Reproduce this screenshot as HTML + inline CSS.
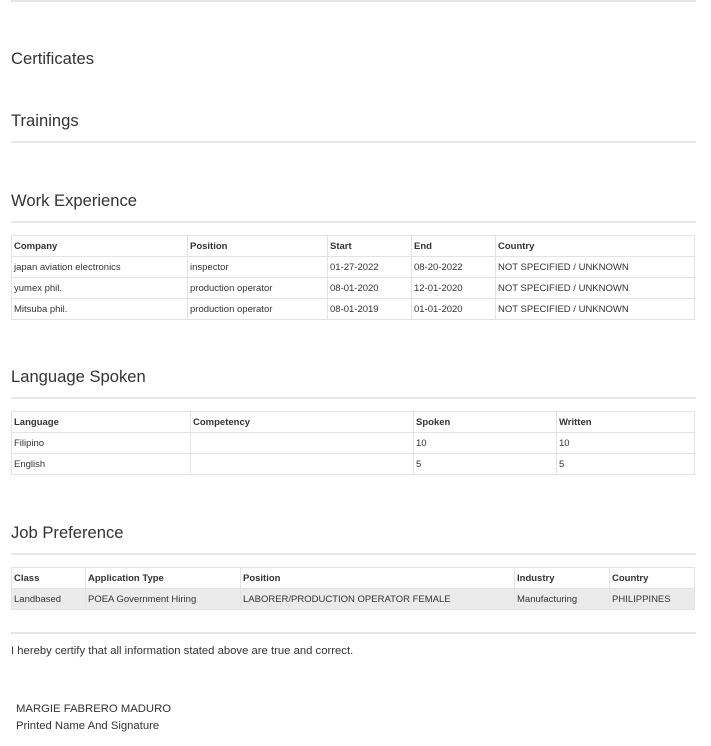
<!DOCTYPE html>
<html><head><style>
body{margin:0;width:711px;height:746px;background:#fff;font-family:"Liberation Sans",sans-serif;color:#333;position:relative;overflow:hidden}
.a{position:absolute}
h2{position:absolute;left:11px;margin:0;font-weight:normal;font-size:16.6px;color:#333;line-height:20px}
.hr{position:absolute;left:11px;width:685px;height:2px;background:#e6e6e6}
table{position:absolute;left:11px;width:684px;border-collapse:collapse;font-size:9.5px;color:#333}
td,th{border:1px solid #e3e3e3;height:20px;padding:0 2px;text-align:left;white-space:nowrap}
th{font-weight:bold}
.g td{background:#ebebeb}
</style></head><body>
<div class="hr" style="top:0;height:2px"></div>
<h2 style="top:49px">Certificates</h2>
<h2 style="top:111px">Trainings</h2>
<div class="hr" style="top:141px"></div>
<h2 style="top:191px">Work Experience</h2>
<div class="hr" style="top:221px"></div>
<table style="top:235px">
<colgroup><col style="width:176px"><col style="width:140px"><col style="width:84px"><col style="width:84px"><col></colgroup>
<tr><th>Company</th><th>Position</th><th>Start</th><th>End</th><th>Country</th></tr>
<tr><td>japan aviation electronics</td><td>inspector</td><td>01-27-2022</td><td>08-20-2022</td><td>NOT SPECIFIED / UNKNOWN</td></tr>
<tr><td>yumex phil.</td><td>production operator</td><td>08-01-2020</td><td>12-01-2020</td><td>NOT SPECIFIED / UNKNOWN</td></tr>
<tr><td>Mitsuba phil.</td><td>production operator</td><td>08-01-2019</td><td>01-01-2020</td><td>NOT SPECIFIED / UNKNOWN</td></tr>
</table>
<h2 style="top:367px">Language Spoken</h2>
<div class="hr" style="top:397px"></div>
<table style="top:411px">
<colgroup><col style="width:179px"><col style="width:223px"><col style="width:143px"><col></colgroup>
<tr><th>Language</th><th>Competency</th><th>Spoken</th><th>Written</th></tr>
<tr><td>Filipino</td><td></td><td>10</td><td>10</td></tr>
<tr><td>English</td><td></td><td>5</td><td>5</td></tr>
</table>
<h2 style="top:523px">Job Preference</h2>
<div class="hr" style="top:553px"></div>
<table style="top:567px">
<colgroup><col style="width:74px"><col style="width:155px"><col style="width:274px"><col style="width:95px"><col></colgroup>
<tr><th>Class</th><th>Application Type</th><th>Position</th><th>Industry</th><th>Country</th></tr>
<tr class="g"><td>Landbased</td><td>POEA Government Hiring</td><td>LABORER/PRODUCTION OPERATOR FEMALE</td><td>Manufacturing</td><td>PHILIPPINES</td></tr>
</table>
<div class="hr" style="top:632px"></div>
<div class="a" style="left:11px;top:645px;font-size:11.3px">I hereby certify that all information stated above are true and correct.</div>
<div class="a" style="left:16px;top:703px;font-size:11.3px">MARGIE FABRERO MADURO</div>
<div class="a" style="left:16px;top:720px;font-size:11.3px">Printed Name And Signature</div>
</body></html>
